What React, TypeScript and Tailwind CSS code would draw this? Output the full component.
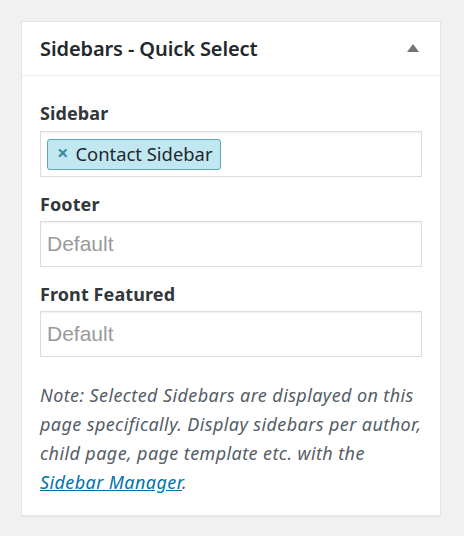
import React from "react";

export default function App() {
  const font = { fontFamily: '"Noto Sans", "Open Sans", sans-serif' };
  return (
    <div className="w-[464px] h-[536px] bg-[#f1f1f1] pt-[21px] pl-[21px]" style={font}>
      <div className="w-[420px] h-[495px] bg-white border border-[#e5e5e5] shadow-[0_1px_1px_rgba(0,0,0,0.04)]">
        <div className="h-[54px] flex items-center justify-between pl-[18px] pr-[20px] border-b border-[#eeeeee]">
          <h2 className="text-[20px] font-semibold text-[#23282d] tracking-[-0.1px]">Sidebars - Quick Select</h2>
          <svg width="14" height="10" viewBox="0 0 14 10" className="mt-[-2px]">
            <polygon points="7,1 13,9 1,9" fill="#72777c" />
          </svg>
        </div>
        <div className="px-[18px] pt-[24px]">
          <div className="text-[18px] font-bold text-[#32373c] leading-[26px] tracking-[0.1px]">Sidebar</div>
          <div className="mt-[5px] h-[46px] border border-[#dddddd] shadow-[inset_0_1px_2px_rgba(0,0,0,0.07)] flex items-center pl-[6px]">
            <div className="h-[31px] flex items-center gap-[7px] pl-[9px] pr-[7px] bg-[#c1e7f1] border border-[#5ba7bb] rounded-[3px]">
              <span className="text-[#3c8ba1] text-[20px] font-bold leading-none mt-[-2px]">×</span>
              <span className="text-[18.4px] text-[#23282d] leading-none">Contact Sidebar</span>
            </div>
          </div>
          <div className="mt-[14px] text-[18px] font-bold text-[#32373c] leading-[26px] tracking-[0.1px]">Footer</div>
          <div className="mt-[4px] h-[46px] border border-[#dddddd] shadow-[inset_0_1px_2px_rgba(0,0,0,0.07)] flex items-center pl-[6px]">
            <span className="text-[21px] text-[#9a9a9a]" style={{ fontFamily: '"Liberation Sans", Arial, sans-serif' }}>Default</span>
          </div>
          <div className="mt-[14px] text-[18px] font-bold text-[#32373c] leading-[26px] tracking-[0.1px]">Front Featured</div>
          <div className="mt-[4px] h-[46px] border border-[#dddddd] shadow-[inset_0_1px_2px_rgba(0,0,0,0.07)] flex items-center pl-[6px]">
            <span className="text-[21px] text-[#9a9a9a]" style={{ fontFamily: '"Liberation Sans", Arial, sans-serif' }}>Default</span>
          </div>
          <p className="mt-[24px] text-[18px] italic text-[#555d66] leading-[29px] tracking-[0.4px]">
            Note: Selected Sidebars are displayed on this page specifically. Display sidebars per author, child page, page template etc. with the{" "}
            <a className="text-[#0073aa] underline">Sidebar Manager</a>.
          </p>
        </div>
      </div>
    </div>
  );
}
